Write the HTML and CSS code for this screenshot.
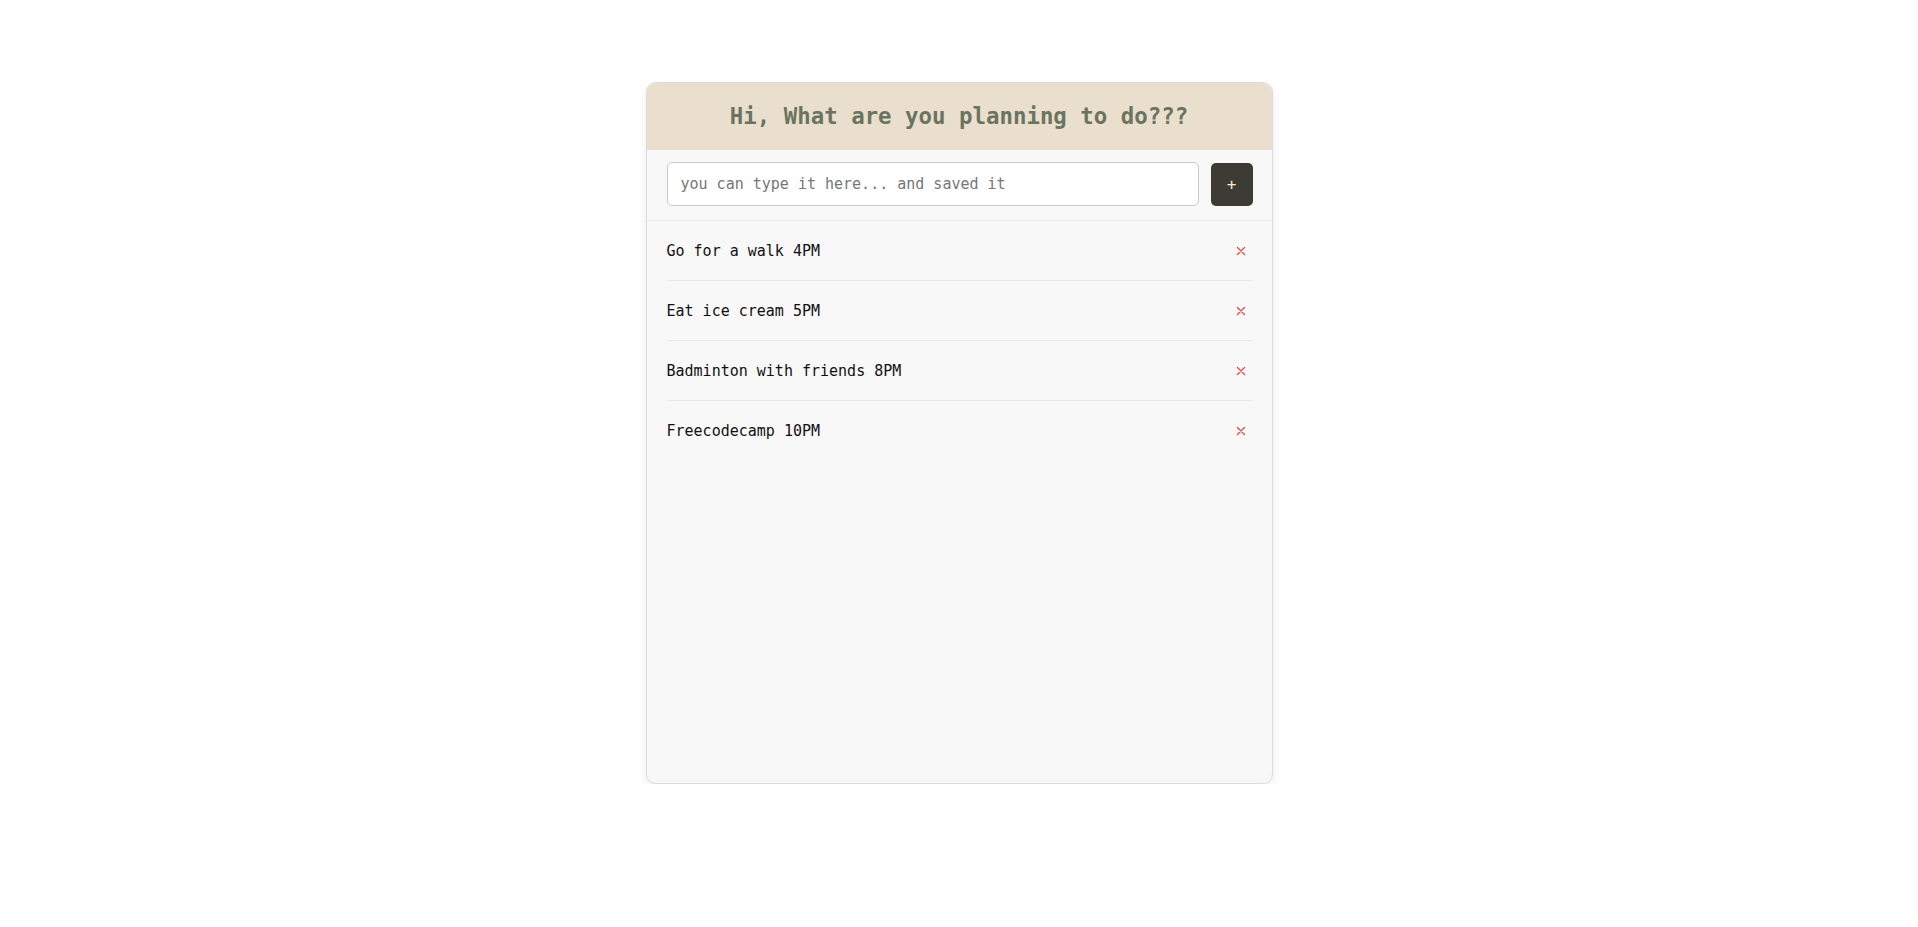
FILE: index.html
```html
<!DOCTYPE html>
<html lang="en">
<head>
<meta charset="utf-8">
<title>Todo</title>
<link rel="stylesheet" href="styles.css">
</head>
<body>
<main class="page">
  <section class="card">
    <header class="card-header">
      <h1 class="title">Hi, What are you planning to do???</h1>
    </header>
    <form class="entry">
      <input class="entry-input" type="text" placeholder="you can type it here... and saved it">
      <button class="entry-add" type="button">+</button>
    </form>
    <ul class="todo-list">
      <li class="todo-item"><span class="todo-text">Go for a walk 4PM</span><button class="todo-del" type="button" aria-label="delete"><svg viewBox="0 0 10 10" width="10" height="10"><path d="M1.5 1.5L8.5 8.5M8.5 1.5L1.5 8.5"/></svg></button></li>
      <li class="todo-item"><span class="todo-text">Eat ice cream 5PM</span><button class="todo-del" type="button" aria-label="delete"><svg viewBox="0 0 10 10" width="10" height="10"><path d="M1.5 1.5L8.5 8.5M8.5 1.5L1.5 8.5"/></svg></button></li>
      <li class="todo-item"><span class="todo-text">Badminton with friends 8PM</span><button class="todo-del" type="button" aria-label="delete"><svg viewBox="0 0 10 10" width="10" height="10"><path d="M1.5 1.5L8.5 8.5M8.5 1.5L1.5 8.5"/></svg></button></li>
      <li class="todo-item"><span class="todo-text">Freecodecamp 10PM</span><button class="todo-del" type="button" aria-label="delete"><svg viewBox="0 0 10 10" width="10" height="10"><path d="M1.5 1.5L8.5 8.5M8.5 1.5L1.5 8.5"/></svg></button></li>
    </ul>
  </section>
</main>
</body>
</html>
```

FILE: styles.css
```css
* { box-sizing: border-box; }
html, body { margin: 0; padding: 0; }
body {
  background: #ffffff;
  font-family: "DejaVu Sans Mono", monospace;
  color: #111;
}
.page {
  display: flex;
  justify-content: center;
  padding-top: 82px;
}
.card {
  width: 627px;
  height: 702px;
  background: #f8f8f8;
  border: 1px solid #dcdcdc;
  border-radius: 10px;
  box-shadow: 0 4px 10px rgba(0,0,0,0.08);
  overflow: hidden;
  display: flex;
  flex-direction: column;
}
.card-header {
  background: #eadfcc;
  height: 67px;
  display: flex;
  align-items: center;
  justify-content: center;
  border-bottom: 1px solid #e4e0d8;
}
.title {
  margin: 0;
  font-size: 22.4px;
  font-weight: bold;
  color: #6b7461;
  line-height: 1;
}
.entry {
  display: flex;
  align-items: center;
  gap: 12px;
  padding: 12px 19px 14px 20px;
  margin: 0;
  border-bottom: 1px solid #ececec;
}
.entry-input {
  flex: 1;
  height: 44px;
  border: 1px solid #c9c9c9;
  border-radius: 5px;
  background: #fff;
  padding: 0 13px;
  font-family: "DejaVu Sans Mono", monospace;
  font-size: 15px;
  color: #222;
  outline: none;
}
.entry-input::placeholder { color: #767676; }
.entry-add {
  width: 42px;
  height: 43px;
  border: none;
  border-radius: 5px;
  background: #3c3c35;
  color: #f3ecdc;
  font-family: "DejaVu Sans Mono", monospace;
  font-size: 16px;
  padding: 0;
  display: flex;
  align-items: center;
  justify-content: center;
}
.todo-list {
  list-style: none;
  margin: 0;
  padding: 0 19px 0 20px;
}
.todo-item {
  display: flex;
  align-items: center;
  justify-content: space-between;
  height: 60px;
  border-bottom: 1px solid #e9e9e9;
}
.todo-item:last-child { border-bottom: none; }
.todo-text {
  font-size: 15px;
  color: #111;
}
.todo-del {
  width: 24px;
  height: 24px;
  border: none;
  background: transparent;
  padding: 0;
  display: flex;
  align-items: center;
  justify-content: center;
}
.todo-del svg {
  fill: none;
  stroke: #e0534a;
  stroke-width: 1.4;
  stroke-linecap: round;
}
```
